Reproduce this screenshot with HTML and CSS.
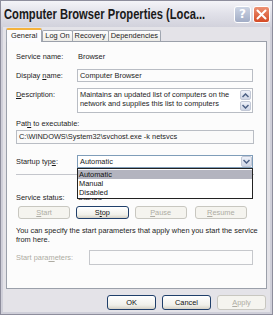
FILE: index.html
```html
<!DOCTYPE html>
<html>
<head>
<meta charset="utf-8">
<link rel="stylesheet" href="styles.css">
</head>
<body>
<div class="window">
  <div class="titlebar">
    <div class="title-box"><span class="title">Computer Browser Properties (Loca...</span></div>
    <span class="tbtn qbtn">?</span>
    <span class="tbtn close"><svg width="11" height="11" viewBox="0 0 11 11"><path d="M1.5 1.5 L9.5 9.5 M9.5 1.5 L1.5 9.5" stroke="#fff" stroke-width="2" stroke-linecap="round"/></svg></span>
  </div>
  <div class="client">
    <div class="tabs">
      <div class="tab active">General</div>
      <div class="tab">Log On</div>
      <div class="tab">Recovery</div>
      <div class="tab">Dependencies</div>
    </div>
    <div class="page">
      <div class="row r-name"><span class="lbl">Service name:</span><span class="val">Browser</span></div>
      <div class="row r-disp"><span class="lbl">Display <u>n</u>ame:</span><div class="field ro">Computer Browser</div></div>
      <div class="row r-desc"><span class="lbl"><u>D</u>escription:</span>
        <div class="field desc">
          <div class="desc-text">Maintains an updated list of computers on the network and supplies this list to computers</div>
          <div class="scroll">
            <span class="sbtn"><svg width="7" height="5" viewBox="0 0 7 5"><path d="M0.5 4 L3.5 1 L6.5 4" fill="none" stroke="#4d6185" stroke-width="1.5"/></svg></span>
            <span class="sbtn"><svg width="7" height="5" viewBox="0 0 7 5"><path d="M0.5 1 L3.5 4 L6.5 1" fill="none" stroke="#4d6185" stroke-width="1.5"/></svg></span>
          </div>
        </div>
      </div>
      <div class="lbl path-lbl">Pat<u>h</u> to executable:</div>
      <div class="field path">C:\WINDOWS\System32\svchost.exe -k netsvcs</div>
      <div class="row r-start"><span class="lbl">Startup typ<u>e</u>:</span>
        <div class="combo-wrap">
          <div class="combo"><span class="combo-val">Automatic</span><span class="cbtn"><svg width="7" height="5" viewBox="0 0 7 5"><path d="M0.5 1 L3.5 4 L6.5 1" fill="none" stroke="#4d6185" stroke-width="1.5"/></svg></span></div>
          <div class="dropdown">
            <div class="opt sel">Automatic</div>
            <div class="opt">Manual</div>
            <div class="opt">Disabled</div>
          </div>
        </div>
      </div>
      <div class="sep"></div>
      <div class="row r-status"><span class="lbl">Service status:</span><span class="val">Started</span></div>
      <div class="svc-btns">
        <span class="btn dis"><u>S</u>tart</span>
        <span class="btn">S<u>t</u>op</span>
        <span class="btn dis"><u>P</u>ause</span>
        <span class="btn dis"><u>R</u>esume</span>
      </div>
      <p class="note">You can specify the start parameters that apply when you start the service from here.</p>
      <div class="row r-params"><span class="lbl dim">Start para<u>m</u>eters:</span><div class="field params"></div></div>
    </div>
    <div class="footer">
      <span class="btn">OK</span>
      <span class="btn">Cancel</span>
      <span class="btn dis"><u>A</u>pply</span>
    </div>
  </div>
</div>
</body>
</html>
```
FILE: styles.css
```css
* { box-sizing: border-box; }
html, body { margin: 0; padding: 0; }
body {
  width: 273px; height: 315px; overflow: hidden;
  font-family: "Liberation Sans", Arial, sans-serif;
  font-size: 7.4px;
  color: #1c1c1c;
  background: #c9c9d3;
}
u { text-decoration: underline; text-underline-offset: 1px; }
.window {
  width: 273px; height: 315px;
  border: 1px solid #8d8d9c;
  background: #cfcfd9;
  display: flex; flex-direction: column;
}
.titlebar {
  height: 26px;
  display: flex; align-items: center;
  padding: 0 2px 0 3px;
  background: linear-gradient(#f4f4f8 0%, #e2e2ea 45%, #d2d2dc 100%);
}
.title-box { flex: 1; min-width: 0; overflow: hidden; height: 18px; }
.title {
  display: inline-block;
  font-family: "Liberation Sans", Arial, sans-serif;
  font-weight: bold;
  font-size: 15px;
  line-height: 18px;
  color: #1a1a1a;
  white-space: nowrap;
  transform: scaleX(0.745);
  transform-origin: 0 50%;
}
.tbtn {
  width: 17px; height: 17px; margin-left: 2px;
  border-radius: 3px;
  display: flex; align-items: center; justify-content: center;
  flex: none;
}
.qbtn {
  border: 1px solid #fff;
  background: linear-gradient(#ccd4e4, #a2adc6);
  color: #fff; font: bold 12px "DejaVu Sans", sans-serif;
}
.close {
  border: 1px solid #fff;
  background: linear-gradient(#ec9173, #d44a25);
}
.client {
  flex: 1;
  margin: 0 2px 2px;
  background: #e4e3e8;
  padding: 1px 3px 0 3px;
  display: flex; flex-direction: column;
}
.tabs { display: flex; align-items: flex-end; height: 13px; position: relative; z-index: 1; }
.tab {
  height: 11px;
  padding: 0 2px;
  border: 1px solid #a0a6b0; border-bottom: none;
  border-radius: 2px 2px 0 0;
  background: linear-gradient(#fefefe, #ecebe6);
  line-height: 10px;
  margin-right: -1px;
}
.tab.active {
  height: 14px;
  padding: 0 4px;
  background: #fcfcfe;
  border-top: 2px solid #f4b23c;
  line-height: 11px;
  margin-bottom: -1px;
  margin-right: 0;
}
.page {
  height: 248px;
  border: 1px solid #9ba0aa;
  background: #fcfcfc;
  padding: 8px 13px 0 9px;
  display: flex; flex-direction: column;
}
.row { display: flex; align-items: center; }
.lbl { width: 61px; flex: none; }
.r-name { height: 10px; margin-top: 1px; }
.val { padding-left: 1px; }
.field {
  border: 1px solid #b9bdc4;
  background: #fcfcfc;
  height: 14px;
  padding: 1px 2px;
  line-height: 10px;
}
.r-disp { margin-top: 8px; }
.r-disp .field { flex: 1; height: 13px; }
.r-desc { margin-top: 6px; align-items: flex-start; }
.r-desc .lbl { padding-top: 2px; }
.field.desc {
  flex: 1; height: 25px; display: flex; padding: 1px 1px 1px 2px;
  line-height: 9px; background: #fff;
}
.desc-text { flex: 1; }
.scroll { width: 11px; display: flex; flex-direction: column; gap: 1px; }
.sbtn {
  height: 10px; border: 1px solid #c2c8d6; border-radius: 2px;
  background: linear-gradient(#eef1f9, #cfd6e6);
  display: flex; align-items: center; justify-content: center;
}
.path-lbl { margin-top: 6px; height: 10px; line-height: 10px; width: auto; }
.field.path { margin-top: 1px; height: 14px; width: 238px; background: #fafafa; }
.r-start { margin-top: 11px; }
.combo-wrap { flex: 1; position: relative; }
.combo {
  height: 13px; border: 1px solid #7f9db9; background: #fff;
  display: flex; align-items: center; padding-left: 2px;
}
.combo-val { flex: 1; }
.cbtn {
  width: 11px; height: 11px;
  border: 1px solid #c2c8d6; border-radius: 2px;
  background: linear-gradient(#eef1f9, #cfd6e6);
  display: flex; align-items: center; justify-content: center;
}
.dropdown {
  position: absolute; left: 0; right: 0; top: 13px;
  border: 1px solid #222; background: #fff;
  padding: 1px 0;
  z-index: 5;
}
.opt { height: 9px; line-height: 9px; padding-left: 1px; color: #111; }
.opt.sel { background: #b3b4bf; }
.sep { height: 1px; background: #c4c6cc; margin-top: 6px; width: 238px; }
.r-status { margin-top: 17px; height: 10px; }
.svc-btns { display: flex; margin-top: 4px; padding-left: 2px; }
.btn {
  height: 13px; width: 54px;
  border: 1px solid #1f3f6a; border-radius: 3px;
  background: linear-gradient(#ffffff, #f0f0ea 70%, #d6d2c6);
  display: flex; align-items: center; justify-content: center;
  color: #111;
}
.svc-btns .btn { margin-right: 6px; }
.svc-btns .btn:nth-child(3) { margin-right: 8px; }
.btn.dis { border-color: #c8c7c0; background: #f5f4ef; color: #aeaca3; }
.note { margin: 8px 0 0; line-height: 8.5px; width: 250px; }
.r-params { margin-top: 6px; }
.lbl.dim { color: #aeaca3; width: 73px; }
.field.params { width: 165px; height: 15px; border-color: #c6c8cc; }
.footer {
  display: flex; justify-content: flex-end; gap: 6px;
  padding: 6px 1px 0 0;
}
.footer .btn { width: 49px; height: 15px; }
```
